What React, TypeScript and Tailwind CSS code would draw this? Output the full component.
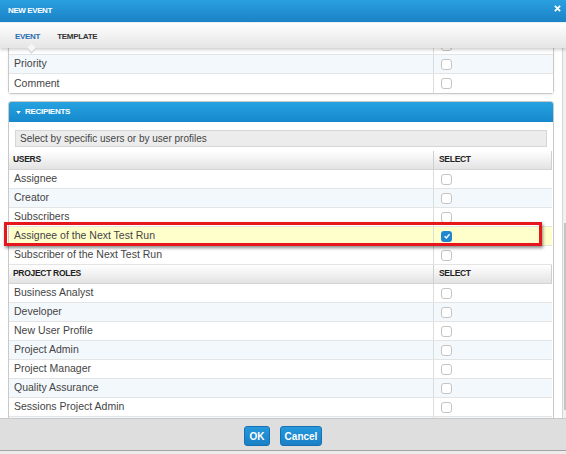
import React from "react";

const sans = "font-['Liberation_Sans',Arial,sans-serif]";

function Box({ on }: { on?: boolean }) {
    if (on) {
        return (
            <span className="flex h-[11px] w-[11px] items-center justify-center rounded-[3px] bg-[#1f86cf]">
                <svg viewBox="0 0 10 10" className="h-[8px] w-[8px]">
                    <path d="M2 5.3 4.2 7.4 8.2 2.8" fill="none" stroke="white" strokeWidth="1.8" />
                </svg>
            </span>
        );
    }
    return <span className="h-[11px] w-[11px] rounded-[3px] border border-[#c4c4c4] bg-white" />;
}

function Row({ label, alt, hl, last }: { label: string; alt?: boolean; hl?: boolean; last?: boolean }) {
    const bg = hl ? "bg-[#ffffcc]" : alt ? "bg-[#f3f8fd]" : "bg-white";
    return (
        <div className={`grid h-[19px] grid-cols-[425px_1fr] ${last ? "" : "border-b border-[#e4e4e4]"} ${bg}`}>
            <div className="flex items-center border-r border-[#dcdcdc] pl-[5px] text-[10.5px] text-[#444]">{label}</div>
            <div className="flex items-center pl-[7px]">
                <Box on={hl} />
            </div>
        </div>
    );
}

function Head({ label }: { label: string }) {
    return (
        <div className="grid h-[19px] grid-cols-[425px_1fr] border-b border-[#d4d4d4] bg-gradient-to-b from-white to-[#e3e3e3]">
            <div className="flex items-center border-r border-[#cfcfcf] pb-[1px] pl-[4px] text-[8.5px] font-bold tracking-[-0.3px] text-[#222]">{label}</div>
            <div className="flex items-center border-r border-[#cfcfcf] pb-[1px] pl-[5px] text-[8.5px] font-bold tracking-[-0.3px] text-[#222]">SELECT</div>
        </div>
    );
}

const users = ["Assignee", "Creator", "Subscribers", "Assignee of the Next Test Run", "Subscriber of the Next Test Run"];
const roles = [
    "Business Analyst",
    "Developer",
    "New User Profile",
    "Project Admin",
    "Project Manager",
    "Quality Assurance",
    "Sessions Project Admin",
    "",
];

export default function App() {
    return (
        <div className={`relative flex h-[454px] w-[566px] flex-col overflow-hidden bg-white ${sans}`}>
            {/* title */}
            <div className="flex h-[22px] items-center justify-between bg-gradient-to-b from-[#2aa0e0] to-[#1b82c6] pl-[8px] pr-[5px]">
                <span className="text-[8px] font-bold tracking-[-0.4px] text-white">NEW EVENT</span>
                <svg viewBox="0 0 8 8" className="mb-[6px] h-[7px] w-[7px]">
                    <path d="M1 1 7 7M7 1 1 7" stroke="white" strokeWidth="2" />
                </svg>
            </div>
            <div className="h-[1px] bg-[#e9f3fa]" />

            {/* tabs */}
            <div className="relative z-10 flex h-[25px] items-center gap-[17px] bg-gradient-to-b from-white to-[#e5e5e5] pl-[15px] pt-[2px] shadow-[0_2px_3px_rgba(0,0,0,0.18)]">
                <span className="text-[8px] font-bold tracking-[-0.3px] text-[#2b6eae]">EVENT</span>
                <span className="text-[8px] font-bold tracking-[-0.3px] text-[#333]">TEMPLATE</span>
                <span className="absolute bottom-[-4px] left-[28px] h-[7px] w-[7px] rotate-45 border-b border-r border-[#d0d0d0] bg-[#f5f5f5]" />
            </div>

            {/* scroll area */}
            <div className="flex h-[370px]">
                <div className="w-[562px] overflow-hidden">
                    <div className="-mt-[13px] px-[8px]">
                        <div className="rounded-b-[3px] border border-[#c9c9c9] shadow-[0_1px_2px_rgba(0,0,0,0.08)]">
                            <Row label="" />
                            <Row label="Priority" alt />
                            <Row label="Comment" last />
                        </div>

                        <div className="mt-[7px] overflow-hidden rounded-t-[3px] border border-[#c9c9c9]">
                            <div className="flex h-[20px] items-center gap-[4px] bg-gradient-to-b from-[#26a2e0] to-[#1589cd] pl-[7px] text-[8px] font-bold tracking-[-0.3px] text-white">
                                <svg viewBox="0 0 6 4" className="h-[3px] w-[5px]">
                                    <path d="M0 0h6L3 4z" fill="white" />
                                </svg>
                                RECIPIENTS
                            </div>
                            <div className="pt-[8px]">
                                <div className="mx-[6px] flex h-[17px] items-center border border-[#d6d6d6] bg-[#ececec] pl-[4px] text-[10px] text-[#444]">
                                    Select by specific users or by user profiles
                                </div>
                                <div className="mr-[1px] mt-[4px]">
                                    <Head label="USERS" />
                                    {users.map((u, i) => (
                                        <Row key={u} label={u} alt={i % 2 === 1} hl={i === 3} />
                                    ))}
                                    <Head label="PROJECT ROLES" />
                                    {roles.map((r, i) => (
                                        <Row key={r || "blank"} label={r} alt={i % 2 === 1} />
                                    ))}
                                </div>
                            </div>
                        </div>
                    </div>
                </div>
                <div className="flex-1 border-l border-[#d6d6d6] bg-[#f1f1f1] pl-[1px]">
                    <div className="mt-[175px] h-[187px] bg-[#c3c3c3]" />
                </div>
            </div>

            {/* footer */}
            <div className="flex h-[33px] justify-center gap-[10px] border-b border-t border-b-[#a3a3a3] border-t-[#c9c9c9] bg-[#dedede] pt-[7px]">
                <button className="h-[20px] w-[26px] rounded-[3px] border border-[#1670b3] bg-gradient-to-b from-[#2698dc] to-[#1a80c6] text-[10px] font-bold text-white">
                    OK
                </button>
                <button className="h-[20px] w-[42px] rounded-[3px] border border-[#1670b3] bg-gradient-to-b from-[#2698dc] to-[#1a80c6] text-[10px] font-bold text-white">
                    Cancel
                </button>
            </div>
            <div className="flex-1 bg-[#ececec]" />

            {/* highlight annotation */}
            <div className="absolute left-[4px] top-[222px] h-[24px] w-[538px] border-[3px] border-[#e5161c] shadow-[1px_2px_3px_rgba(0,0,0,0.45)]" />
        </div>
    );
}
